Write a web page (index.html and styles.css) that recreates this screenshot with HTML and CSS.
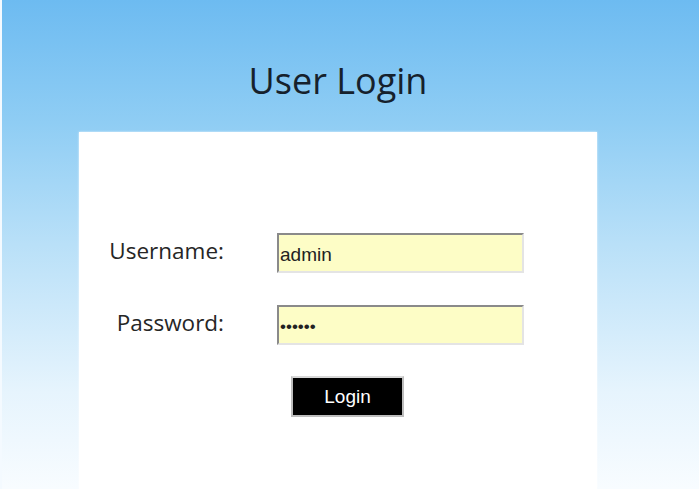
FILE: index.html
```html
<!DOCTYPE html>
<html lang="en">
<head>
    <meta charset="UTF-8">
    <title>User Login</title>
    <link rel="stylesheet" href="styles.css">
</head>
<body>
    <div class="page">
        <div class="login-wrap">
            <h1 class="login-title">User Login</h1>

            <!-- Form panel -->
            <div class="login-panel">
                <form class="login-form">
                    <label class="field-label" for="username">Username:</label>
                    <input class="field-input" id="username" type="text" value="admin">

                    <label class="field-label" for="password">Password:</label>
                    <input class="field-input" id="password" type="password" value="123456">

                    <div class="button-cell">
                        <button class="login-button" type="button">Login</button>
                    </div>
                </form>
            </div>
        </div>
    </div>
</body>
</html>
```

FILE: styles.css
```css
/* Page */
html, body {
    margin: 0;
    padding: 0;
    height: 100%;
}

body {
    font-family: 'Open Sans', sans-serif;
    background: #fff;
}

.page {
    height: 100%;
    box-sizing: border-box;
    border-left: 2px solid #f4faff;
    background: linear-gradient(180deg, #6dbbf1 0%, #8fcdf4 25%, #b9e0f8 50%, #e6f4fd 80%, #f8fcff 100%);
    overflow: hidden;
}

.login-wrap {
    width: 518px;
    margin-left: 77px;
    display: flex;
    flex-direction: column;
    height: 100%;
}

/* Title */
.login-title {
    flex-shrink: 0;
    margin: 0;
    padding-top: 59px;
    height: 132px;
    box-sizing: border-box;
    text-align: center;
    font-size: 36px;
    font-weight: 400;
    color: #16212c;
    line-height: 44px;
}

/* Panel */
.login-panel {
    flex: 1;
    background: #fff;
    box-shadow: 0 0 2px rgba(255, 255, 255, 0.8);
    padding-top: 101px;
}

.login-form {
    display: grid;
    grid-template-columns: 145px 247px;
    column-gap: 53px;
    row-gap: 32px;
    align-items: center;
}

.field-label {
    text-align: right;
    font-size: 22.5px;
    color: #262626;
    margin-top: -6px;
}

.field-input {
    height: 40px;
    box-sizing: border-box;
    margin: 0;
    padding: 3px 1px 0;
    font-family: 'Liberation Sans', Arial, sans-serif;
    font-size: 19px;
    color: #222;
    background: #fdfdc6;
    border: 2px solid;
    border-color: #8a8a8a #e4e4e4 #e4e4e4 #8a8a8a;
    outline: none;
}

#password {
    font-size: 17px;
    letter-spacing: 0;
}

.button-cell {
    grid-column: 2;
    margin-top: -1px;
}

.login-button {
    margin-left: 14px;
    width: 113px;
    height: 41px;
    background: #000;
    color: #fff;
    border: 2px solid #bdbdbd;
    border-top-color: #d8d8d8;
    font-family: 'Liberation Sans', Arial, sans-serif;
    font-size: 19px;
    cursor: pointer;
}
```
